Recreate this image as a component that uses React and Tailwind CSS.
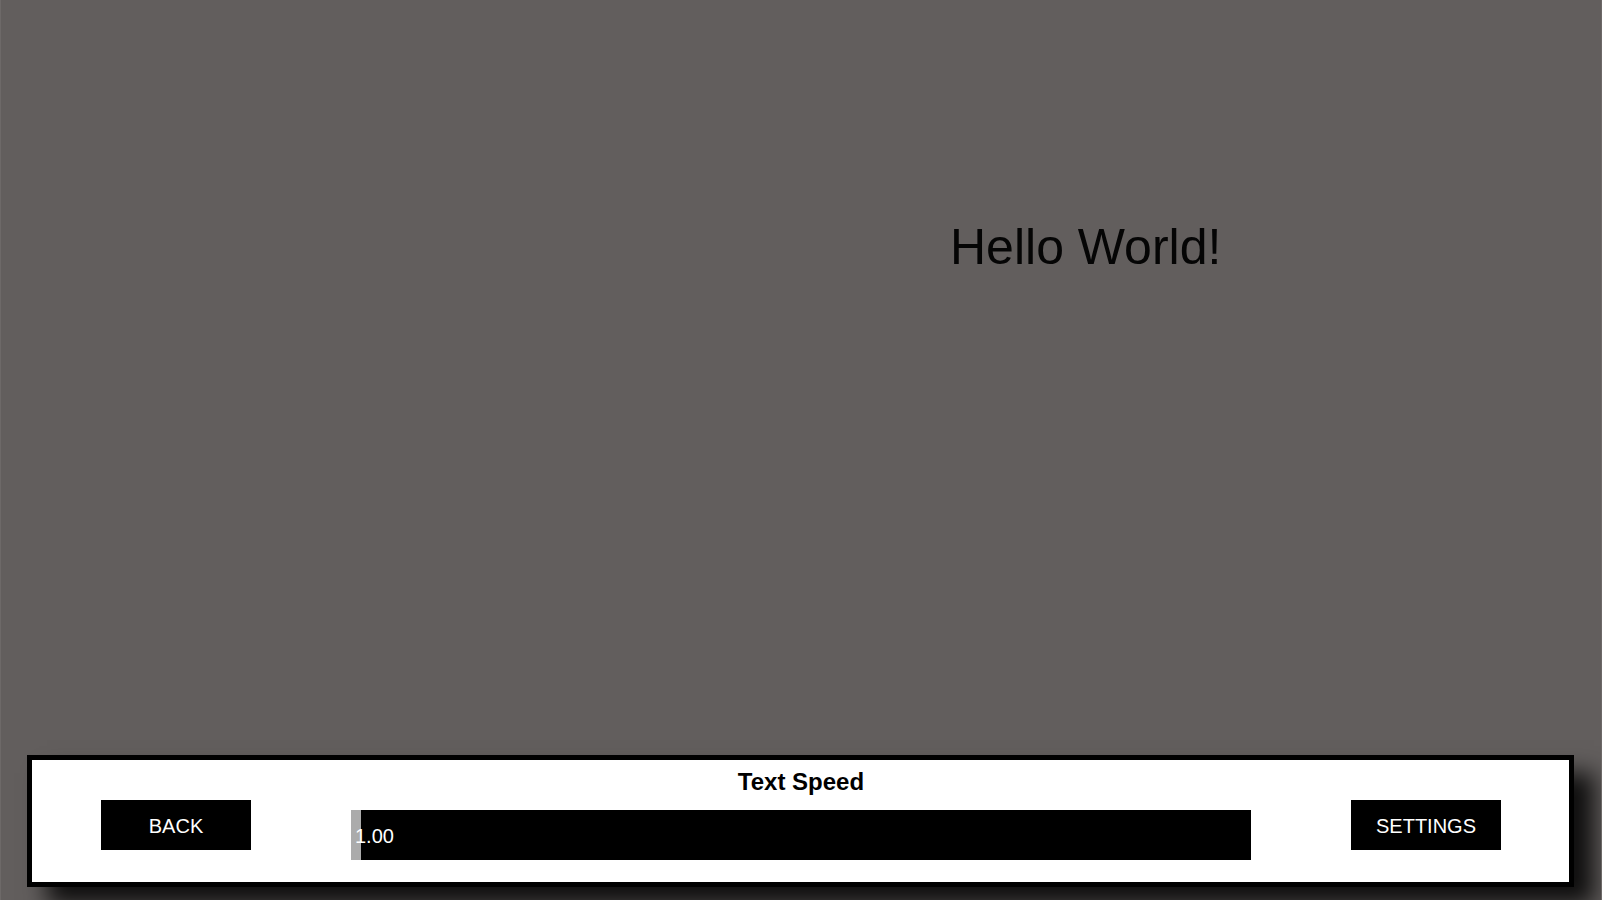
import React, { useState } from "react";

const font = { fontFamily: '"Liberation Sans", Arial, sans-serif' };

const MenuButton = ({ label, className = "" }) => (
  <button
    className={`w-[150px] h-[50px] pt-[2px] bg-black text-white text-[20px] flex items-center justify-center shrink-0 ${className}`}
  >
    {label}
  </button>
);

const SpeedSlider = ({ value }) => (
  <div className="relative w-[900px] h-[50px] bg-black flex">
    <div className="w-[10px] h-full bg-[#ababab]" />
    <span className="absolute left-[4px] top-0 h-full pt-[2px] flex items-center text-white text-[20px]">
      {value.toFixed(2)}
    </span>
  </div>
);

export default function App() {
  const [speed] = useState(1);

  return (
    <div
      className="w-full h-[900px] bg-[#625e5d] border-x border-[#6d6968] flex flex-col overflow-hidden"
      style={font}
    >
      <div className="mt-[222px] ml-[949px] text-[50px] leading-none text-[#050505]">
        Hello World!
      </div>

      <div className="mt-auto mb-[13px] ml-[26px] w-[1547px] h-[132px] border-[5px] border-black bg-white shadow-[20px_18px_22px_rgba(0,0,0,0.85)] flex items-start">
        <MenuButton label="BACK" className="ml-[69px] mt-[40px]" />

        <div className="ml-[100px] flex flex-col items-center">
          <h2 className="mt-[10px] text-[24px] font-bold leading-none text-black">
            Text Speed
          </h2>
          <div className="mt-[16px]">
            <SpeedSlider value={speed} />
          </div>
        </div>

        <MenuButton label="SETTINGS" className="ml-[100px] mt-[40px]" />
      </div>
    </div>
  );
}
